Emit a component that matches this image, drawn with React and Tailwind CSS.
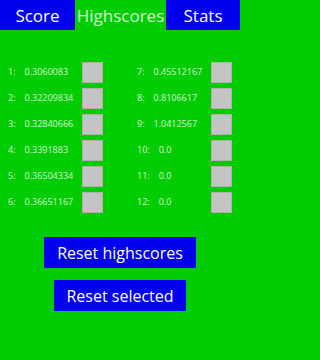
import React from 'react';

const left = [
  ['1:', '0.3060083'],
  ['2:', '0.32209834'],
  ['3:', '0.32840666'],
  ['4:', '0.3391883'],
  ['5:', '0.36504334'],
  ['6:', '0.36651167'],
];

const right = [
  ['7:', '0.45512167'],
  ['8:', '0.8106617'],
  ['9:', '1.0412567'],
  ['10:', '0.0'],
  ['11:', '0.0'],
  ['12:', '0.0'],
];

function ScoreRow({ label, value }) {
  return (
    <div className="flex items-center h-[26px]">
      <div className="w-[82px] pl-2 flex gap-[9px] text-[9px] text-white/80 whitespace-nowrap">
        <span>{label}</span>
        <span>{value}</span>
      </div>
      <div className="w-[21px] h-[21px] bg-[#c4c4c4] border border-[#b0b0b0]" />
    </div>
  );
}

export default function App() {
  return (
    <div className="w-full min-h-screen bg-[#00cc00]" style={{ fontFamily: '"Open Sans", "Noto Sans", sans-serif' }}>
      <div className="w-[240px] h-[360px] flex flex-col">
        {/* tabs */}
        <div className="flex h-[30px] text-[17px] leading-none">
          <div className="w-[75px] bg-[#0000ee] text-white flex items-center justify-center">Score</div>
          <div className="w-[91px] text-white/80 flex items-center justify-center">Highscores</div>
          <div className="flex-1 bg-[#0000ee] text-white flex items-center justify-center">Stats</div>
        </div>

        {/* scores */}
        <div className="flex mt-[29px]">
          <div className="w-[129px] flex flex-col">
            {left.map(([l, v]) => <ScoreRow key={l} label={l} value={v} />)}
          </div>
          <div className="flex-1 flex flex-col">
            {right.map(([l, v]) => <ScoreRow key={l} label={l} value={v} />)}
          </div>
        </div>

        {/* buttons */}
        <div className="flex flex-col items-center gap-3 mt-[22px] text-white text-[16px] leading-none">
          <button className="w-[152px] h-[31px] bg-[#0000ee]">Reset highscores</button>
          <button className="w-[132px] h-[31px] bg-[#0000ee]">Reset selected</button>
        </div>
      </div>
    </div>
  );
}
